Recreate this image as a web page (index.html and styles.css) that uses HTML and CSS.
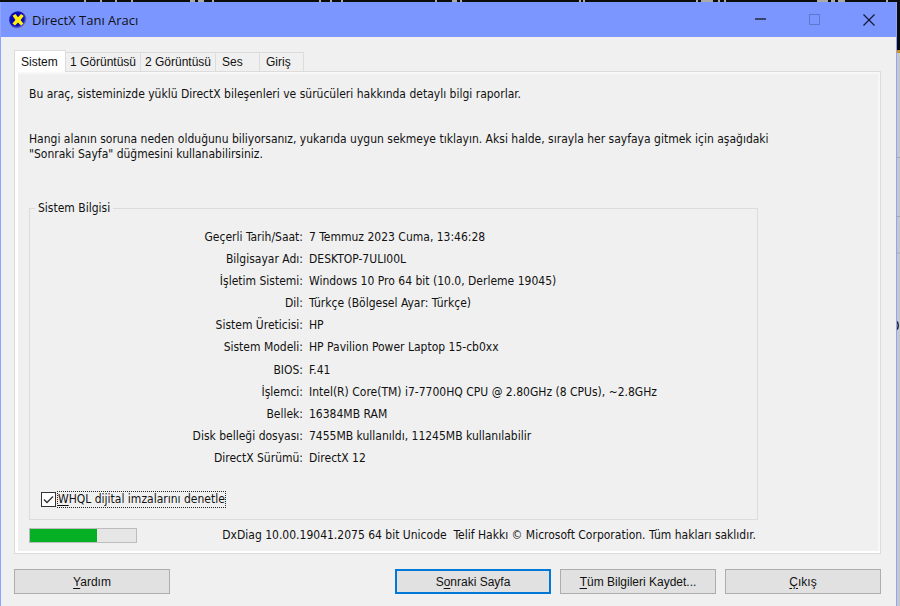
FILE: index.html
```html
<!DOCTYPE html>
<html lang="tr">
<head>
<meta charset="utf-8">
<title>DirectX Tanı Aracı</title>
<link rel="stylesheet" href="styles.css">
</head>
<body>
<div class="backdrop" aria-hidden="true">
  <svg class="backdrop-top" width="900" height="2" viewBox="0 0 900 2">
    <path fill="none" stroke="#aaa" stroke-width="2" d="M84 1h2M100 1h2M115 1h2M131 1h2M190 1h5M198 1h6M212 1h2M319 1h2M330 1h2M341 1h2M435 1h2M452 1h5M460 1h2M579 1h2M583 1h2M696 1h2M701 1h12M718 1h2M724 1h2M817 1h11M831 1h4M838 1h7M886 1h2"/>
  </svg>
  <svg class="backdrop-side" width="3" height="340" viewBox="0 0 3 340">
    <path d="M0 104.500h3M0 163.500h3M0 200h3" stroke="#aaa"/>
    <path d="M0 268.500q2.500 4 0 8" fill="none" stroke="#222" stroke-width="1.500"/>
  </svg>
</div>
<div class="window">
  <header class="titlebar">
    <svg class="app-icon" width="18" height="18" viewBox="0 0 18 18" aria-hidden="true">
      <defs>
        <radialGradient id="orb" cx="40%" cy="40%" r="62%">
          <stop offset="0" stop-color="#0000a8"/>
          <stop offset=".7" stop-color="#1010b8"/>
          <stop offset="1" stop-color="#8f9fd8"/>
        </radialGradient>
      </defs>
      <circle cx="9" cy="9" r="8.8" fill="url(#orb)"/>
      <path d="M3.600 4.800 6.500 3 9 6.200 12 3 14.800 5 11.600 9 14.300 12.600 12 14.500 9 11.600 6 14.600 3.400 12.600 6.400 9z" fill="#ffee10"/>
    </svg>
    <h1 class="title">DirectX Tanı Aracı</h1>
    <div class="caption-buttons">
      <button class="caption" type="button" aria-label="Simge durumuna küçült">
        <svg width="12" height="12" viewBox="0 0 12 12"><path d="M0 5h11" stroke="#3a4270" stroke-width="2"/></svg>
      </button>
      <button class="caption" type="button" aria-label="Ekranı kapla" disabled>
        <svg width="12" height="12" viewBox="0 0 12 12"><path d="M.5.5h10v10H.5z" fill="none" stroke="#6177cf"/></svg>
      </button>
      <button class="caption" type="button" aria-label="Kapat">
        <svg width="12" height="12" viewBox="0 0 12 12"><path d="M.5.5l11 11M11.500.5l-11 11" stroke="#151a30" stroke-width="1.200"/></svg>
      </button>
    </div>
  </header>
  <main class="client">
    <div class="tabs" role="tablist">
      <button class="tab selected" type="button" role="tab" aria-selected="true">Sistem</button>
      <button class="tab display" type="button" role="tab">1 Görüntüsü</button>
      <button class="tab display" type="button" role="tab">2 Görüntüsü</button>
      <button class="tab" type="button" role="tab">Ses</button>
      <button class="tab" type="button" role="tab">Giriş</button>
    </div>
    <section class="panel" role="tabpanel">
      <p class="intro">Bu araç, sisteminizde yüklü DirectX bileşenleri ve sürücüleri hakkında detaylı bilgi raporlar.</p>
      <p class="hint">Hangi alanın soruna neden olduğunu biliyorsanız, yukarıda uygun sekmeye tıklayın. Aksi halde, sırayla her sayfaya gitmek için aşağıdaki "Sonraki Sayfa" düğmesini kullanabilirsiniz.</p>
      <fieldset class="group">
        <legend>Sistem Bilgisi</legend>
        <table class="info">
          <tr><th scope="row">Geçerli Tarih/Saat:</th><td>7 Temmuz 2023 Cuma, 13:46:28</td></tr>
          <tr><th scope="row">Bilgisayar Adı:</th><td>DESKTOP-7ULI00L</td></tr>
          <tr><th scope="row">İşletim Sistemi:</th><td>Windows 10 Pro 64 bit (10.0, Derleme 19045)</td></tr>
          <tr><th scope="row">Dil:</th><td>Türkçe (Bölgesel Ayar: Türkçe)</td></tr>
          <tr><th scope="row">Sistem Üreticisi:</th><td>HP</td></tr>
          <tr><th scope="row">Sistem Modeli:</th><td>HP Pavilion Power Laptop 15-cb0xx</td></tr>
          <tr><th scope="row">BIOS:</th><td>F.41</td></tr>
          <tr><th scope="row">İşlemci:</th><td>Intel(R) Core(TM) i7-7700HQ CPU @ 2.80GHz (8 CPUs), ~2.8GHz</td></tr>
          <tr><th scope="row">Bellek:</th><td>16384MB RAM</td></tr>
          <tr><th scope="row">Disk belleği dosyası:</th><td>7455MB kullanıldı, 11245MB kullanılabilir</td></tr>
          <tr><th scope="row">DirectX Sürümü:</th><td>DirectX 12</td></tr>
        </table>
        <div class="check">
          <input type="checkbox" id="whql" checked>
          <label for="whql"><u>W</u>HQL dijital imzalarını denetle</label>
        </div>
      </fieldset>
      <div class="status">
        <progress value="63" max="100" aria-label="İlerleme"></progress>
        <span class="copyright">DxDiag 10.00.19041.2075 64 bit Unicode&nbsp; Telif Hakkı © Microsoft Corporation. Tüm hakları saklıdır.</span>
      </div>
    </section>
    <footer class="actions">
      <button class="action help" type="button"><u>Y</u>ardım</button>
      <button class="action default" type="button">S<u>o</u>nraki Sayfa</button>
      <button class="action" type="button"><u>T</u>üm Bilgileri Kaydet...</button>
      <button class="action" type="button"><u>Ç</u>ıkış</button>
    </footer>
  </main>
</div>
</body>
</html>
```
FILE: styles.css
```css
* {
  box-sizing: border-box;
}

body {
  margin: 0;
  min-height: 100vh;
  padding: 2px 3px 0 0;
  display: flex;
  background: linear-gradient(#0c0c0c 50px, #d0901c 50px, #d0901c 53px, #c8c8c8 53px);
  font: 12px/15px "DejaVu Sans Condensed", "Noto Sans", sans-serif;
  color: #111;
}

.backdrop-top {
  position: absolute;
  top: 0;
  left: 0;
  max-width: 100%;
}

.backdrop-side {
  position: absolute;
  top: 53px;
  right: 0;
}

.window {
  position: relative;
  flex: 1;
  min-width: 0;
  display: flex;
  flex-direction: column;
  border: solid #8ea4ff;
  border-width: 0 1px;
  background: #f0f0f0;
}

.titlebar {
  display: flex;
  align-items: center;
  height: 35px;
  padding-left: 8px;
  background: #7b96ff;
}

.title {
  flex: 1;
  margin: 0 0 0 5px;
  font: 13px/20px "Open Sans", "Noto Sans", sans-serif;
}

.caption-buttons {
  display: flex;
}

.caption {
  width: 54px;
  height: 35px;
  padding: 0;
  border: 0;
  background: none;
  display: grid;
  place-items: center;
}

.client {
  flex: 1;
  display: flex;
  flex-direction: column;
  padding: 13px 15px 12px 13px;
}

.tabs {
  display: flex;
  align-items: flex-end;
  height: 21px;
}

.tab {
  height: 19px;
  padding: 0 6px;
  border: 1px solid #dcdcdc;
  border-width: 1px 1px 0 0;
  background: #f0f0f0;
  color: #111;
  font: 12px/18px "Liberation Sans", Arial, sans-serif;
  text-align: left;
  min-width: 44px;
  white-space: nowrap;
}

.tab.display {
  width: 75px;
  padding: 0 4px;
}

.tab.selected {
  position: relative;
  width: 52px;
  height: 22px;
  margin-bottom: -1px;
  border-left-width: 1px;
  background: #fff;
}

.panel {
  flex: 1;
  display: flex;
  flex-direction: column;
  padding: 15px 0 6px 11px;
  border: 1px solid #dcdcdc;
  box-shadow: inset 3px -2px #fff, inset -2px 2px #f7f7f7;
}

.intro,
.hint {
  margin: 0;
  max-width: 760px;
  padding-left: 3px;
}

.hint {
  margin-top: 30px;
}

.group {
  width: 729px;
  max-width: 100%;
  margin: 39px 0 0 3px;
  padding: 10px 10px 12px;
  border: 1px solid #dcdcdc;
}

legend {
  margin-left: -5px;
  padding: 0 3px;
}

.info {
  height: 244px;
  border-collapse: collapse;
}

.info th,
.info td {
  padding: 0;
  font-weight: normal;
  text-align: left;
}

.info th {
  width: 263px;
  text-align: right;
}

.info td {
  padding-left: 6px;
}

.check {
  display: flex;
  align-items: center;
  gap: 2px;
  margin: 22px 0 0 1px;
}

.check input {
  appearance: none;
  width: 15px;
  height: 15px;
  margin: 0;
  border: 1px solid #333;
  background: #fff url("data:image/svg+xml,%3Csvg xmlns='http://www.w3.org/2000/svg' viewBox='0 0 13 13'%3E%3Cpath d='M2 6.5l3 3L11 3.500' fill='none' stroke='%23333' stroke-width='1.400'/%3E%3C/svg%3E") center / 13px no-repeat;
}

.check label {
  outline: 1px dotted #222;
}

.status {
  display: flex;
  align-items: center;
  justify-content: space-between;
  width: 729px;
  max-width: 100%;
  margin: 8px 0 0 3px;
  padding-right: 2px;
}

progress {
  appearance: none;
  width: 108px;
  height: 15px;
  border: 1px solid #bcbcbc;
  background: #e6e6e6;
}

progress::-webkit-progress-bar {
  background: #e6e6e6;
}

progress::-webkit-progress-value {
  background: #06b025;
}

.actions {
  display: flex;
  gap: 9px;
  margin-top: 15px;
}

.action {
  width: 156px;
  height: 25px;
  padding: 0;
  border: 1px solid #adadad;
  background: #e1e1e1;
  color: #111;
  font: 12px/18px "Liberation Sans", Arial, sans-serif;
}

.action.help {
  margin-right: auto;
}

.action.default {
  border: 2px solid #0078d7;
}

u {
  text-underline-offset: 2px;
}
```
